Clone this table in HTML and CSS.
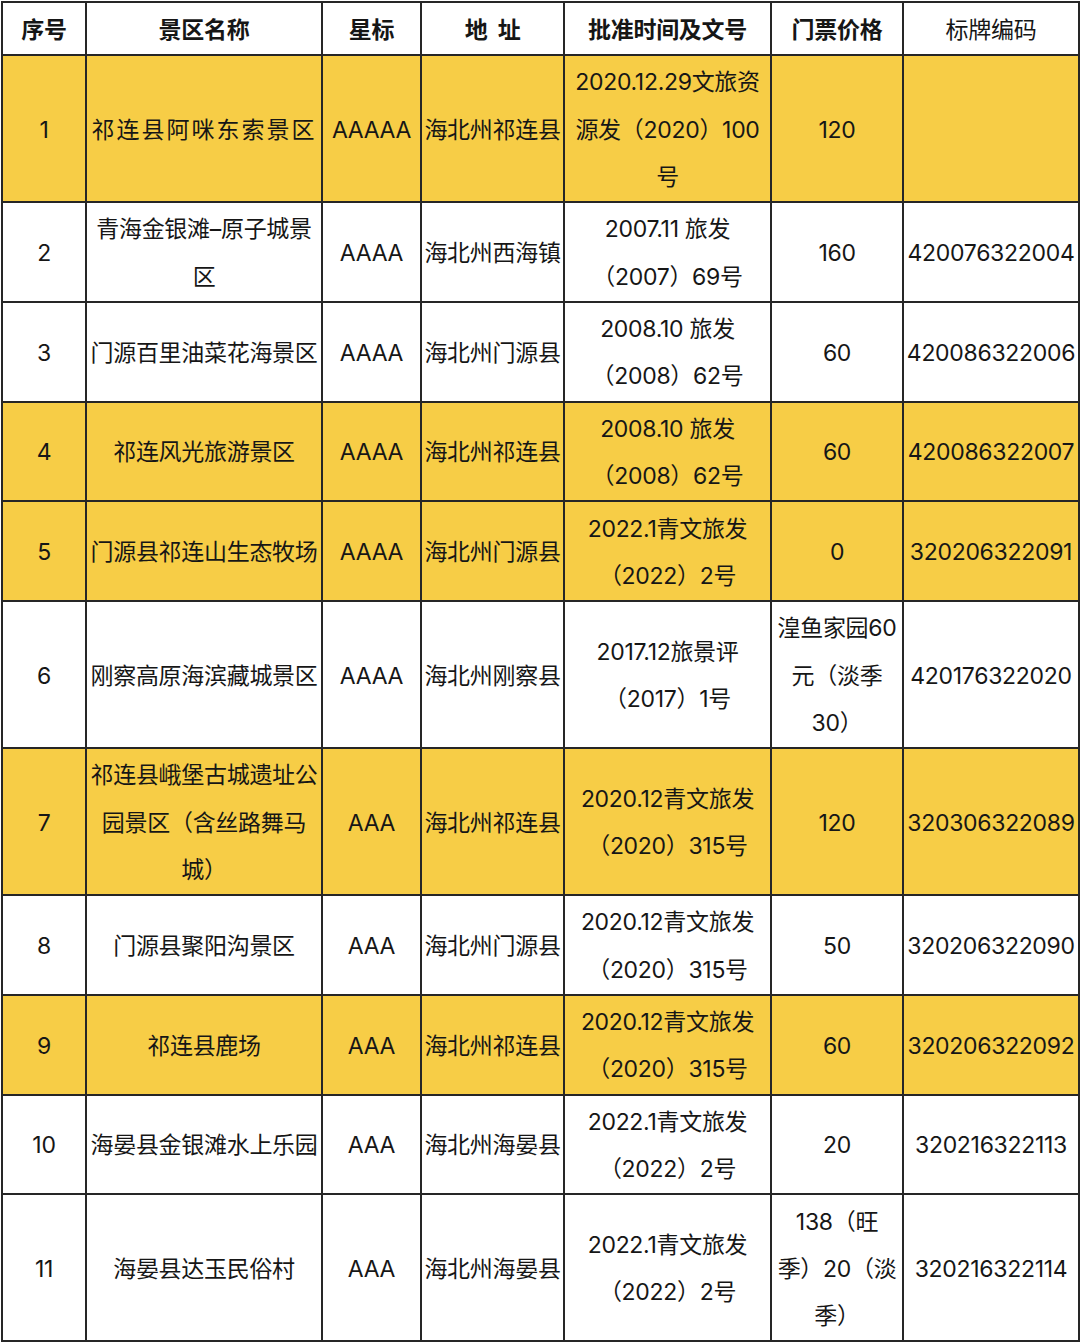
FILE: index.html
```html
<!DOCTYPE html>
<html lang="zh-CN">
<head>
<meta charset="utf-8">
<title>景区列表</title>
<link rel="stylesheet" href="styles.css">
</head>
<body>
<table class="grid">
  <colgroup>
    <col class="c-no"><col class="c-name"><col class="c-star"><col class="c-addr"><col class="c-doc"><col class="c-price"><col class="c-code">
  </colgroup>
  <thead>
    <tr class="head">
      <th>序号</th><th>景区名称</th><th>星标</th><th>地&nbsp;&nbsp;址</th><th>批准时间及文号</th><th>门票价格</th><th class="light">标牌编码</th>
    </tr>
  </thead>
  <tbody>
    <tr class="hl">
      <td>1</td><td class="wide">祁连县阿咪东索景区</td><td>AAAAA</td><td>海北州祁连县</td><td>2020.12.29文旅资<br>源发（2020）100<br>号</td><td>120</td><td></td>
    </tr>
    <tr>
      <td>2</td><td>青海金银滩–原子城景<br>区</td><td>AAAA</td><td>海北州西海镇</td><td>2007.11 旅发<br>（2007）69号</td><td>160</td><td>420076322004</td>
    </tr>
    <tr>
      <td>3</td><td>门源百里油菜花海景区</td><td>AAAA</td><td>海北州门源县</td><td>2008.10 旅发<br>（2008）62号</td><td>60</td><td>420086322006</td>
    </tr>
    <tr class="hl">
      <td>4</td><td>祁连风光旅游景区</td><td>AAAA</td><td>海北州祁连县</td><td>2008.10 旅发<br>（2008）62号</td><td>60</td><td>420086322007</td>
    </tr>
    <tr class="hl">
      <td>5</td><td>门源县祁连山生态牧场</td><td>AAAA</td><td>海北州门源县</td><td>2022.1青文旅发<br>（2022）2号</td><td>0</td><td>320206322091</td>
    </tr>
    <tr>
      <td>6</td><td>刚察高原海滨藏城景区</td><td>AAAA</td><td>海北州刚察县</td><td>2017.12旅景评<br>（2017）1号</td><td>湟鱼家园60<br>元（淡季<br>30）</td><td>420176322020</td>
    </tr>
    <tr class="hl">
      <td>7</td><td>祁连县峨堡古城遗址公<br>园景区（含丝路舞马<br>城）</td><td>AAA</td><td>海北州祁连县</td><td>2020.12青文旅发<br>（2020）315号</td><td>120</td><td>320306322089</td>
    </tr>
    <tr>
      <td>8</td><td>门源县聚阳沟景区</td><td>AAA</td><td>海北州门源县</td><td>2020.12青文旅发<br>（2020）315号</td><td>50</td><td>320206322090</td>
    </tr>
    <tr class="hl">
      <td>9</td><td>祁连县鹿场</td><td>AAA</td><td>海北州祁连县</td><td>2020.12青文旅发<br>（2020）315号</td><td>60</td><td>320206322092</td>
    </tr>
    <tr>
      <td>10</td><td>海晏县金银滩水上乐园</td><td>AAA</td><td>海北州海晏县</td><td>2022.1青文旅发<br>（2022）2号</td><td>20</td><td>320216322113</td>
    </tr>
    <tr>
      <td>11</td><td>海晏县达玉民俗村</td><td>AAA</td><td>海北州海晏县</td><td>2022.1青文旅发<br>（2022）2号</td><td>138（旺<br>季）20（淡<br>季）</td><td>320216322114</td>
    </tr>
  </tbody>
</table>
</body>
</html>
```

FILE: styles.css
```css
html, body {
  margin: 0;
  padding: 0;
  background: #ffffff;
}
body {
  padding: 1px 0 0 1px;
  font-family: "Inter", "Noto Sans CJK SC", sans-serif;
  color: #161616;
}
.grid {
  border-collapse: collapse;
  table-layout: fixed;
  width: 1077px;
  font-size: 23px;
  letter-spacing: -0.3px;
}
.c-no { width: 84px; }
.c-name { width: 236px; }
.c-star { width: 99px; }
.c-addr { width: 143px; }
.c-doc { width: 207px; }
.c-price { width: 132px; }
.c-code { width: 176px; }
.grid th,
.grid td {
  border: 2px solid #262626;
  padding: 3.25px 0 0;
  text-align: center;
  vertical-align: middle;
  white-space: nowrap;
  line-height: 47.25px;
  overflow: hidden;
}
.grid th {
  font-weight: 700;
  line-height: 48.5px;
  padding-top: 2.5px;
  background: #ffffff;
}
.grid th.light {
  font-weight: 400;
}
.grid tr.hl td {
  background: #f7cd46;
}
.grid td.wide {
  letter-spacing: 2px;
}
```
